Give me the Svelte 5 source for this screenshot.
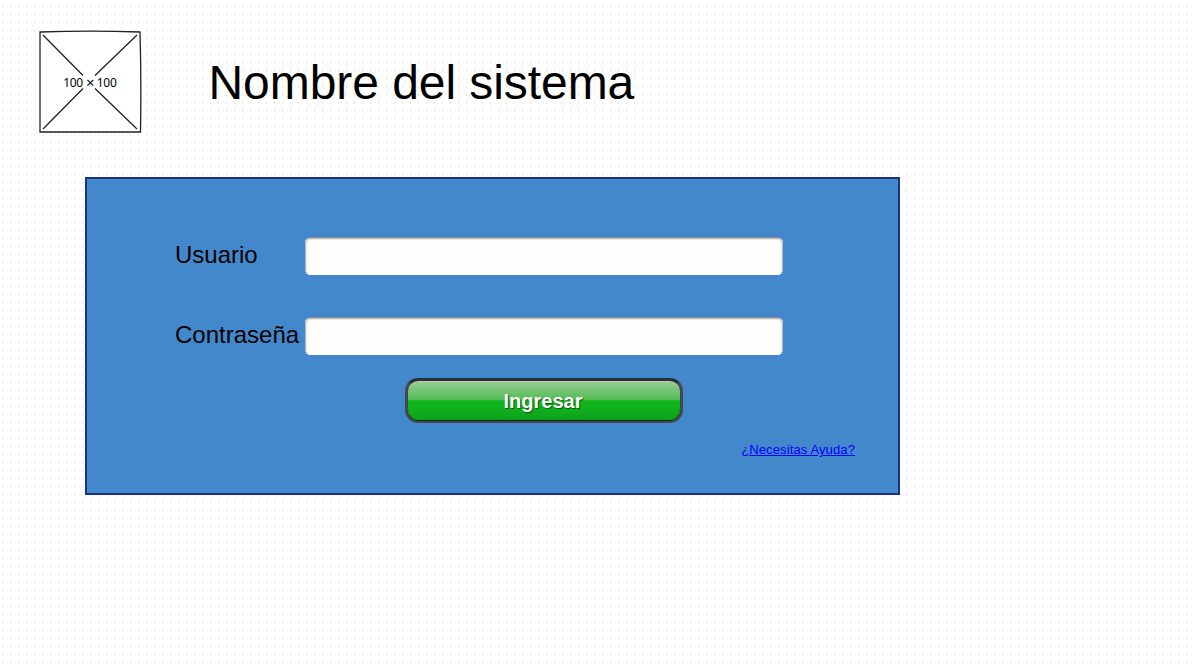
<script>
  let usuario = $state('');
  let clave = $state('');
</script>

<main>
  <header>
    <svg class="logo" width="104" height="104" viewBox="0 0 104 104">
      <path d="M2 2 Q52 .4 102 2 Q103.4 50 102.5 102 H2 Z" fill="#fff" stroke="#222" stroke-width="1.3" />
      <path d="M5 5 L45 45.5 M99 5 L57 45.5 M5 99 L45 58.5 M99 99 L57 58.5" fill="none" stroke="#222" stroke-width="1.3" />
      <text y="57"><tspan x="25.2">100</tspan> <tspan class="times" x="48" dy="1">×</tspan> <tspan x="58.8" dy="-1">100</tspan></text>
    </svg>
    <h1>Nombre del sistema</h1>
  </header>

  <form onsubmit={(e) => e.preventDefault()}>
    <div class="row">
      <label for="usuario">Usuario</label>
      <input id="usuario" type="text" bind:value={usuario} />
    </div>
    <div class="row">
      <label for="clave">Contraseña</label>
      <input id="clave" type="password" bind:value={clave} />
    </div>
    <button type="submit">Ingresar</button>
    <a href="#ayuda">¿Necesitas Ayuda?</a>
  </form>
</main>

<style>
  :global(body) {
    overflow: hidden;
  }
  main {
    box-sizing: border-box;
    height: 664px;
    padding-top: 30px;
    background: #fff
      url("data:image/svg+xml,%3Csvg xmlns='http://www.w3.org/2000/svg' width='8' height='8'%3E%3Crect x='2' y='6' width='1' height='2' fill='%23e4e4e4'/%3E%3C/svg%3E");
    font-family: "Liberation Sans", Arial, sans-serif;
    color: #000;
  }
  header {
    display: flex;
    align-items: center;
    height: 104px;
    padding-left: 38px;
    gap: 66.5px;
  }
  .logo text {
    font: 12px "Noto Sans", sans-serif;
    letter-spacing: -0.3px;
  }
  .logo .times {
    font-size: 15px;
  }
  h1 {
    margin: 0;
    padding-top: 2px;
    font-size: 48px;
    line-height: 56px;
    font-weight: 400;
    letter-spacing: -0.06px;
    white-space: nowrap;
  }
  form {
    box-sizing: border-box;
    width: 815px;
    height: 318px;
    margin: 43px 0 0 85px;
    padding: 58px 43px 0 88px;
    border: 2px solid #19347f;
    background: #4488cc;
    display: flex;
    flex-direction: column;
  }
  .row {
    display: flex;
    height: 38px;
    margin-bottom: 42px;
  }
  .row + .row {
    margin-bottom: 23px;
  }
  label {
    width: 130px;
    font-size: 24px;
    line-height: 35px;
  }
  input {
    box-sizing: border-box;
    width: 478px;
    height: 38px;
    padding: 0 8px;
    border: 1px solid #b5b5b5;
    border-color: #858a92 #b4bcc6 #fffefd;
    border-radius: 5px;
    background: #fffefd;
    box-shadow: inset 0 1px 2px #aaa;
    font: 20px "Liberation Sans", Arial, sans-serif;
    outline: none;
  }
  button {
    box-sizing: border-box;
    width: 278px;
    height: 45px;
    margin-left: 230px;
    padding: 0 2px 0 0;
    border: 3px solid #444650;
    border-top-color: #292e38;
    border-bottom-width: 2px;
    border-radius: 13px;
    background: linear-gradient(#9bcb98 0, #4fbd50 48%, #10b71b 49%, #0fae1c 75%, #0d9f20 100%) padding-box;
    box-shadow: inset 0 1px 0 #b2cfae, inset 0 -1px 0 #062a10;
    font: bold 20px/37px "Liberation Sans", Arial, sans-serif;
    color: #fff;
    text-shadow: 1px 1px 1px #07530d;
  }
  a {
    align-self: flex-end;
    margin-top: 19px;
    font-size: 13px;
    line-height: 15px;
    letter-spacing: 0.12px;
    color: #00f;
  }
</style>
